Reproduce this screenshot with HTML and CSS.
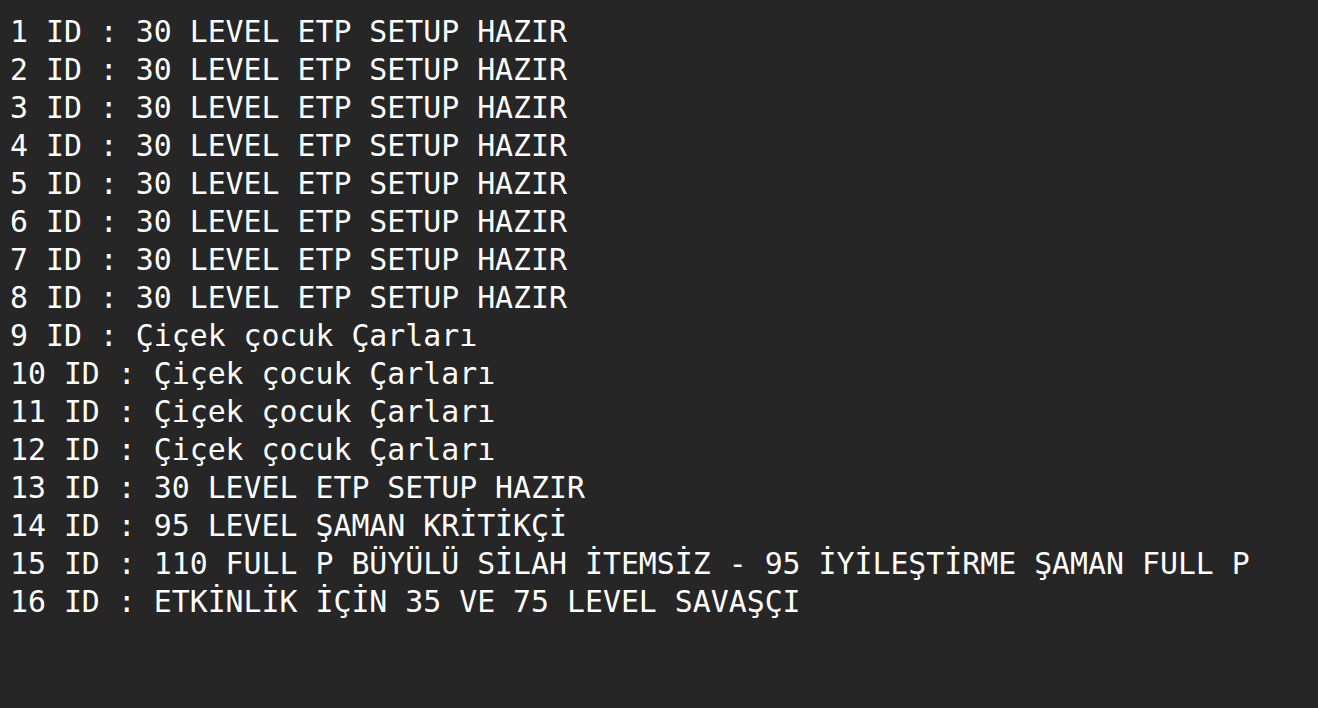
FILE: index.html
```html
<!DOCTYPE html>
<html lang="tr">
<head>
<meta charset="utf-8">
<link rel="stylesheet" href="styles.css">
</head>
<body>
<div class="console">
<div class="line">1 ID : 30 LEVEL ETP SETUP HAZIR</div>
<div class="line">2 ID : 30 LEVEL ETP SETUP HAZIR</div>
<div class="line">3 ID : 30 LEVEL ETP SETUP HAZIR</div>
<div class="line">4 ID : 30 LEVEL ETP SETUP HAZIR</div>
<div class="line">5 ID : 30 LEVEL ETP SETUP HAZIR</div>
<div class="line">6 ID : 30 LEVEL ETP SETUP HAZIR</div>
<div class="line">7 ID : 30 LEVEL ETP SETUP HAZIR</div>
<div class="line">8 ID : 30 LEVEL ETP SETUP HAZIR</div>
<div class="line">9 ID : Çiçek çocuk Çarları</div>
<div class="line">10 ID : Çiçek çocuk Çarları</div>
<div class="line">11 ID : Çiçek çocuk Çarları</div>
<div class="line">12 ID : Çiçek çocuk Çarları</div>
<div class="line">13 ID : 30 LEVEL ETP SETUP HAZIR</div>
<div class="line">14 ID : 95 LEVEL ŞAMAN KRİTİKÇİ</div>
<div class="line">15 ID : 110 FULL P BÜYÜLÜ SİLAH İTEMSİZ - 95 İYİLEŞTİRME ŞAMAN FULL P</div>
<div class="line">16 ID : ETKİNLİK İÇİN 35 VE 75 LEVEL SAVAŞÇI</div>
</div>
</body>
</html>
```
FILE: styles.css
```css
html, body {
  margin: 0;
  padding: 0;
  background: #262626;
  height: 100%;
}
.console {
  padding: 13px 0 0 10px;
  font-family: "DejaVu Sans Mono", "Liberation Mono", monospace;
  font-size: 29.85px;
  line-height: 38px;
  color: #ffffff;
}
.line {
  white-space: pre;
}
```
